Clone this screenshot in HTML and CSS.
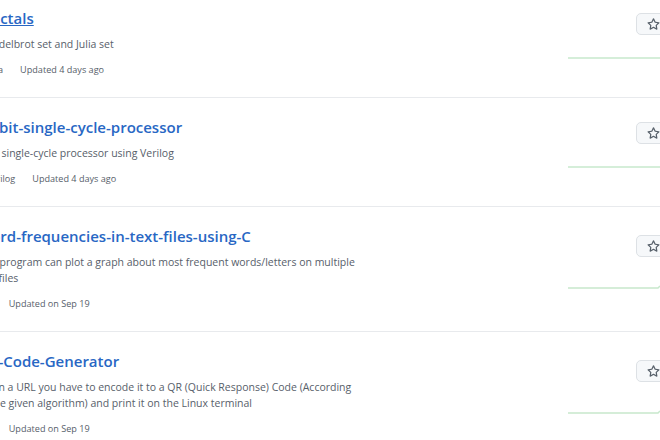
FILE: index.html
```html
<!DOCTYPE html>
<html lang="en">
<head>
<meta charset="utf-8">
<title>Repositories</title>
<link rel="stylesheet" href="styles.css">
</head>
<body>
<ul class="repo-list">
  <li class="repo">
    <div class="repo-main">
      <h3 class="repo-title"><a href="#" class="repo-link hover">Fractals</a></h3>
      <p class="repo-desc">Mandelbrot set and Julia set</p>
      <div class="repo-meta"><span class="lang">Java</span><span>Updated 4 days ago</span></div>
    </div>
    <div class="repo-side">
      <button class="star-btn"><svg class="star" viewBox="0 0 16 16" width="13" height="13"><path d="M8 .25a.75.75 0 0 1 .673.418l1.882 3.815 4.21.612a.75.75 0 0 1 .416 1.279l-3.046 2.97.719 4.192a.751.751 0 0 1-1.088.791L8 12.347l-3.766 1.98a.75.75 0 0 1-1.088-.79l.72-4.194L.818 6.374a.75.75 0 0 1 .416-1.28l4.21-.611L7.327.668A.75.75 0 0 1 8 .25Zm0 2.445L6.615 5.5a.75.75 0 0 1-.564.41l-3.097.45 2.24 2.184a.75.75 0 0 1 .216.664l-.528 3.084 2.769-1.456a.75.75 0 0 1 .698 0l2.77 1.456-.53-3.084a.75.75 0 0 1 .216-.664l2.24-2.183-3.096-.45a.75.75 0 0 1-.564-.41L8 2.694Z"/></svg><span>Star</span></button>
      <svg class="spark" viewBox="0 0 155 27" width="155" height="27"><path d="M11 13 H155"/></svg>
    </div>
  </li>
  <li class="repo">
    <div class="repo-main">
      <h3 class="repo-title"><a href="#" class="repo-link">32-bit-single-cycle-processor</a></h3>
      <p class="repo-desc">RISC single-cycle processor using Verilog</p>
      <div class="repo-meta"><span class="lang">Verilog</span><span>Updated 4 days ago</span></div>
    </div>
    <div class="repo-side">
      <button class="star-btn"><svg class="star" viewBox="0 0 16 16" width="13" height="13"><path d="M8 .25a.75.75 0 0 1 .673.418l1.882 3.815 4.21.612a.75.75 0 0 1 .416 1.279l-3.046 2.97.719 4.192a.751.751 0 0 1-1.088.791L8 12.347l-3.766 1.98a.75.75 0 0 1-1.088-.79l.72-4.194L.818 6.374a.75.75 0 0 1 .416-1.28l4.21-.611L7.327.668A.75.75 0 0 1 8 .25Zm0 2.445L6.615 5.5a.75.75 0 0 1-.564.41l-3.097.45 2.24 2.184a.75.75 0 0 1 .216.664l-.528 3.084 2.769-1.456a.75.75 0 0 1 .698 0l2.77 1.456-.53-3.084a.75.75 0 0 1 .216-.664l2.24-2.183-3.096-.45a.75.75 0 0 1-.564-.41L8 2.694Z"/></svg><span>Star</span></button>
      <svg class="spark" viewBox="0 0 155 27" width="155" height="27"><path d="M11 13 H155"/></svg>
    </div>
  </li>
  <li class="repo">
    <div class="repo-main">
      <h3 class="repo-title"><a href="#" class="repo-link">Word-frequencies-in-text-files-using-C</a></h3>
      <p class="repo-desc">This program can plot a graph about most frequent words/letters on multiple text files</p>
      <div class="repo-meta"><span class="lang">C</span><span>Updated on Sep 19</span></div>
    </div>
    <div class="repo-side">
      <button class="star-btn"><svg class="star" viewBox="0 0 16 16" width="13" height="13"><path d="M8 .25a.75.75 0 0 1 .673.418l1.882 3.815 4.21.612a.75.75 0 0 1 .416 1.279l-3.046 2.97.719 4.192a.751.751 0 0 1-1.088.791L8 12.347l-3.766 1.98a.75.75 0 0 1-1.088-.79l.72-4.194L.818 6.374a.75.75 0 0 1 .416-1.28l4.21-.611L7.327.668A.75.75 0 0 1 8 .25Zm0 2.445L6.615 5.5a.75.75 0 0 1-.564.41l-3.097.45 2.24 2.184a.75.75 0 0 1 .216.664l-.528 3.084 2.769-1.456a.75.75 0 0 1 .698 0l2.77 1.456-.53-3.084a.75.75 0 0 1 .216-.664l2.24-2.183-3.096-.45a.75.75 0 0 1-.564-.41L8 2.694Z"/></svg><span>Star</span></button>
      <svg class="spark" viewBox="0 0 155 27" width="155" height="27"><path d="M11 13 H101 L103 11"/></svg>
    </div>
  </li>
  <li class="repo">
    <div class="repo-main">
      <h3 class="repo-title"><a href="#" class="repo-link">QR-Code-Generator</a></h3>
      <p class="repo-desc">Given a URL you have to encode it to a QR (Quick Response) Code (According to the given algorithm) and print it on the Linux terminal</p>
      <div class="repo-meta"><span class="lang">C</span><span>Updated on Sep 19</span></div>
    </div>
    <div class="repo-side">
      <button class="star-btn"><svg class="star" viewBox="0 0 16 16" width="13" height="13"><path d="M8 .25a.75.75 0 0 1 .673.418l1.882 3.815 4.21.612a.75.75 0 0 1 .416 1.279l-3.046 2.97.719 4.192a.751.751 0 0 1-1.088.791L8 12.347l-3.766 1.98a.75.75 0 0 1-1.088-.79l.72-4.194L.818 6.374a.75.75 0 0 1 .416-1.28l4.21-.611L7.327.668A.75.75 0 0 1 8 .25Zm0 2.445L6.615 5.5a.75.75 0 0 1-.564.41l-3.097.45 2.24 2.184a.75.75 0 0 1 .216.664l-.528 3.084 2.769-1.456a.75.75 0 0 1 .698 0l2.77 1.456-.53-3.084a.75.75 0 0 1 .216-.664l2.24-2.183-3.096-.45a.75.75 0 0 1-.564-.41L8 2.694Z"/></svg><span>Star</span></button>
      <svg class="spark" viewBox="0 0 155 27" width="155" height="27"><path d="M11 13 H101 L103 11"/></svg>
    </div>
  </li>
</ul>
</body>
</html>
```

FILE: styles.css
```css
html, body {
  margin: 0;
  padding: 0;
  background: #ffffff;
  overflow: hidden;
}

body {
  width: 660px;
  height: 440px;
  font-family: "Open Sans", "Noto Sans", sans-serif;
  color: #57606a;
}

.repo-list {
  list-style: none;
  margin: -11px 0 0 -23px;
  padding: 0;
  width: 735px;
}

.repo {
  display: flex;
  padding: 19px 0 20px 0;
  border-bottom: 1px solid #e8eaed;
}

.repo-main {
  flex: 1;
  min-width: 0;
}

.repo-title {
  margin: 0;
  font-size: 15px;
  line-height: 21px;
  font-weight: 600;
}

.repo-link {
  color: #2867c4;
  text-decoration: none;
}

.repo-link.hover {
  text-decoration: underline;
}

.repo-desc {
  margin: 7px 0 0 0;
  font-size: 10.5px;
  line-height: 16px;
  width: 383px;
  color: #57606a;
}

.repo-meta {
  margin-top: 11px;
  font-size: 9.1px;
  line-height: 14px;
  padding-left: 9px;
  display: flex;
  color: #57606a;
}

.lang {
  margin-right: 17px;
}

.repo-side {
  width: 155px;
  flex-shrink: 0;
  display: flex;
  flex-direction: column;
  justify-content: space-around;
  align-items: flex-start;
}

.star-btn {
  margin-left: 79px;
  height: 22px;
  padding: 0 10px 0 10px;
  display: flex;
  align-items: center;
  gap: 5px;
  background: #f6f8fa;
  border: 1px solid #dde1e5;
  border-radius: 5px;
  font-family: "Open Sans", sans-serif;
  font-size: 10px;
  font-weight: 600;
  color: #24292f;
}

.star {
  fill: #57606a;
  display: block;
}

.spark {
  display: block;
  fill: none;
}

.spark path {
  stroke: #c7e8cc;
  stroke-width: 1.5;
}
```
